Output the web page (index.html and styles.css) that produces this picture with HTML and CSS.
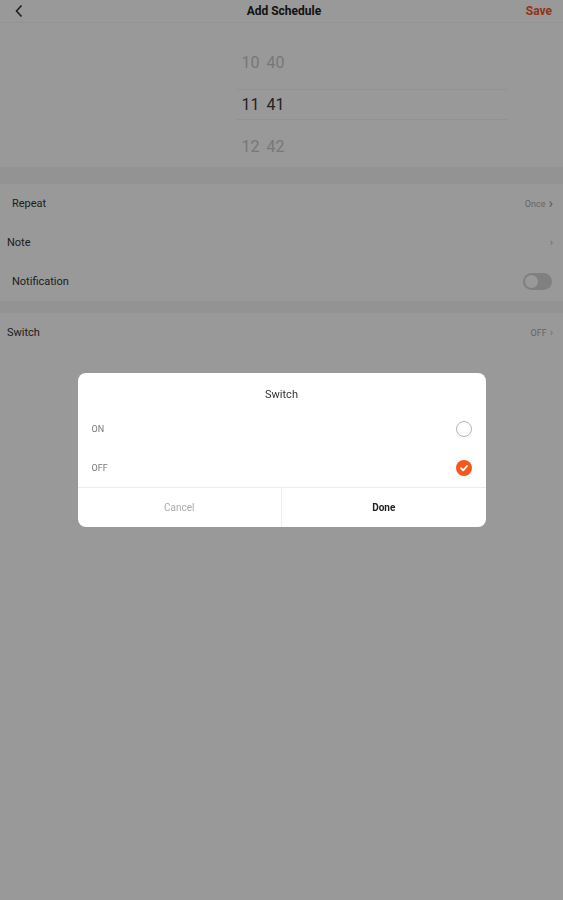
FILE: index.html
```html
<!DOCTYPE html>
<html lang="en">
<head>
    <meta charset="UTF-8">
    <meta name="viewport" content="width=device-width, initial-scale=1.0">
    <title>Add Schedule</title>
    <link rel="stylesheet" href="styles.css">
</head>
<body>
    <div class="header">
        <span class="back">
            <svg width="10" height="14" viewBox="0 0 10 14"><path d="M7.5 1.5 L2.5 7 L7.5 12.5" fill="none" stroke="#333" stroke-width="1.6"/></svg>
        </span>
        <span class="title">Add Schedule</span>
        <span class="save">Save</span>
    </div>

    <div class="picker">
        <div class="pick-row">
            <span class="col">10</span><span class="col">40</span>
        </div>
        <div class="pick-row selected">
            <div class="sel-lines"></div>
            <span class="col">11</span><span class="col">41</span>
        </div>
        <div class="pick-row">
            <span class="col">12</span><span class="col">42</span>
        </div>
    </div>

    <div class="band"></div>

    <div class="row indent">
        <span class="label">Repeat</span>
        <span class="value">Once <span class="chev">&#x203A;</span></span>
    </div>
    <div class="row">
        <span class="label">Note</span>
        <span class="value"><span class="chev small">&#x203A;</span></span>
    </div>
    <div class="row indent">
        <span class="label">Notification</span>
        <span class="toggle"><span class="knob"></span></span>
    </div>

    <div class="band thin"></div>

    <div class="row">
        <span class="label">Switch</span>
        <span class="value">OFF <span class="chev small">&#x203A;</span></span>
    </div>

    <!-- dimmed overlay with the switch dialog -->
    <div class="overlay">
        <div class="dialog">
            <div class="dlg-title">Switch</div>
            <div class="option">
                <span>ON</span>
                <span class="radio"></span>
            </div>
            <div class="option">
                <span>OFF</span>
                <span class="radio checked">
                    <svg width="10" height="10" viewBox="0 0 10 10"><path d="M2 5.2 L4.2 7.3 L8 3" fill="none" stroke="#fff" stroke-width="1.8" stroke-linecap="round" stroke-linejoin="round"/></svg>
                </span>
            </div>
            <div class="buttons">
                <div class="btn cancel">Cancel</div>
                <div class="btn done">Done</div>
            </div>
        </div>
    </div>
</body>
</html>
```

FILE: styles.css
```css
body {
    margin: 0;
    padding: 0;
    font-family: Roboto, "Liberation Sans", Arial, sans-serif;
    background: #fff;
    color: #2a2a2a;
    font-size: 11px;
}
.header {
    height: 22px;
    display: flex;
    align-items: center;
    justify-content: space-between;
    padding: 0 11px 0 14px;
}
.back {
    display: flex;
    align-items: center;
}
.title {
    font-weight: bold;
    font-size: 12px;
    color: #222;
    margin-left: 18px;
}
.save {
    font-weight: bold;
    font-size: 12px;
    color: #f2581f;
}
.picker {
    height: 126px;
    padding-top: 18px;
    border-top: 1px solid #f6f6f6;
}
.pick-row {
    position: relative;
    height: 42px;
    display: flex;
    align-items: center;
    justify-content: center;
    gap: 8px;
    font-size: 16px;
    color: #c8c8c8;
    padding-right: 38px;
}
.pick-row .col {
    width: 17px;
    text-align: center;
}
.pick-row.selected {
    color: #3a3a3a;
}
.sel-lines {
    position: absolute;
    left: 237px;
    right: 55px;
    top: 6px;
    height: 29px;
    border-top: 1px solid #f3f3f3;
    border-bottom: 1px solid #f3f3f3;
}
.band {
    height: 17px;
    background: #f5f5f5;
}
.band.thin {
    height: 12px;
}
.row {
    height: 39px;
    display: flex;
    align-items: center;
    justify-content: space-between;
    padding: 0 10px 0 7px;
}
.row.indent {
    padding-left: 12px;
}
.row .label {
    color: #333;
}
.row .value {
    font-size: 9px;
    color: #aaa;
    display: flex;
    align-items: center;
    gap: 3px;
}
.chev {
    font-size: 15px;
    color: #999;
    line-height: 1;
}
.chev.small {
    font-size: 11px;
    color: #bbb;
}
.toggle {
    width: 29px;
    height: 17px;
    border-radius: 9px;
    background: #d6d6d6;
    display: flex;
    align-items: center;
    margin-right: 1px;
}
.knob {
    width: 15px;
    height: 15px;
    border-radius: 50%;
    background: #fff;
    border: 1px solid #cfcfcf;
    box-sizing: border-box;
    margin-left: 1px;
}
.overlay {
    position: fixed;
    inset: 0;
    background: rgba(0, 0, 0, 0.4);
    display: flex;
    align-items: center;
    justify-content: center;
}
.dialog {
    width: 408px;
    background: #fff;
    border-radius: 8px;
    overflow: hidden;
}
.dlg-title {
    text-align: center;
    font-size: 11px;
    line-height: 16px;
    padding: 14px 0 6px;
    color: #333;
}
.option {
    height: 39px;
    display: flex;
    align-items: center;
    justify-content: space-between;
    padding: 0 14px 0 14px;
    font-size: 9px;
    color: #777;
}
.radio {
    width: 16px;
    height: 16px;
    border-radius: 50%;
    border: 1.5px solid #b5b5b5;
    box-sizing: border-box;
    display: flex;
    align-items: center;
    justify-content: center;
}
.radio.checked {
    border: none;
    background: #f5571d;
}
.buttons {
    display: flex;
    border-top: 1px solid #eee;
}
.btn {
    flex: 1;
    height: 39px;
    display: flex;
    align-items: center;
    justify-content: center;
    font-size: 10px;
}
.cancel {
    color: #aaa;
    border-right: 1px solid #eee;
}
.done {
    color: #222;
    font-weight: bold;
}
```
